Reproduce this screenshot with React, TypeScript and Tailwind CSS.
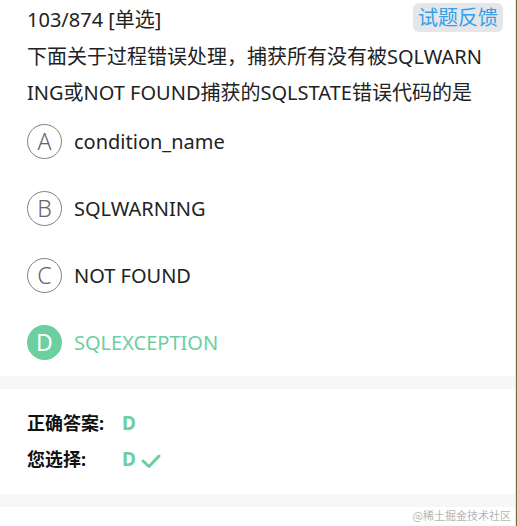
import React from "react";

const font = { fontFamily: '"Noto Sans", "Noto Sans CJK SC", sans-serif' };

function Option({ letter, text, selected }: { letter: string; text: string; selected?: boolean }) {
  return (
    <div className="h-[67px] flex items-center pl-[27px]">
      {selected ? (
        <div className="w-[35px] h-[35px] rounded-full bg-[#6ccf9f] text-white flex items-center justify-center text-[23px]">
          {letter}
        </div>
      ) : (
        <div className="w-[35px] h-[35px] rounded-full border border-[#808080] text-[#666] flex items-center justify-center text-[23px] font-light">
          {letter}
        </div>
      )}
      <div className={"ml-[12px] text-[20px] " + (selected ? "text-[#6ccf9f]" : "text-[#222]")}>{text}</div>
    </div>
  );
}

export default function App() {
  return (
    <div className="w-[517px] h-[526px] bg-white flex relative overflow-hidden" style={font}>
      <div className="flex-1 flex flex-col">
        <div className="flex justify-between items-start pl-[27px] pr-[12px] pt-[3px]">
          <div className="text-[20px] text-[#222] mt-[3px] leading-[28px]">103/874 [单选]</div>
          <div className="h-[29px] px-[5px] rounded-md bg-[#e4e6ea] text-[#35a0e8] text-[20px] leading-[29px] flex items-center">
            试题反馈
          </div>
        </div>
        <div className="pl-[27px] mt-[5px] text-[20px] leading-[36px] text-[#222] whitespace-nowrap">
          下面关于过程错误处理，捕获所有没有被SQLWARN
          <br />
          ING或NOT FOUND捕获的SQLSTATE错误代码的是
        </div>
        <div className="mt-[-3px]">
          <Option letter="A" text="condition_name" />
          <Option letter="B" text="SQLWARNING" />
          <Option letter="C" text="NOT FOUND" />
          <Option letter="D" text="SQLEXCEPTION" selected />
        </div>
        <div className="h-[13px] bg-[#f7f7f7]" />
        <div className="pl-[27px] pt-[16px] pb-[17px]">
          <div className="flex items-center h-[36px]">
            <div className="w-[95px] text-[18px] font-bold text-[#111]">正确答案:</div>
            <div className="text-[19px] font-bold text-[#6ccf9f]">D</div>
          </div>
          <div className="flex items-center h-[36px]">
            <div className="w-[95px] text-[18px] font-bold text-[#111]">您选择:</div>
            <div className="text-[19px] font-bold text-[#6ccf9f]">D</div>
            <svg width="20" height="16" viewBox="0 0 20 16" className="ml-[5px] mt-[3px]">
              <path d="M2 8 L8 13.5 L18 3" fill="none" stroke="#6ccf9f" strokeWidth="3" strokeLinecap="round" strokeLinejoin="round" />
            </svg>
          </div>
        </div>
        <div className="h-[13px] bg-[#f7f7f7]" />
        <div className="flex-1" />
      </div>
      <div className="w-[2px] flex">
        <div className="w-[1px] bg-[#dfe3d0]" />
        <div className="w-[1px] bg-[#6b7a3a]" />
      </div>
      <div className="absolute right-[6px] bottom-[3px] text-[11px] text-[#b5b5b5]" style={{ fontFamily: '"Noto Sans CJK SC", serif' }}>
        @稀土掘金技术社区
      </div>
    </div>
  );
}
